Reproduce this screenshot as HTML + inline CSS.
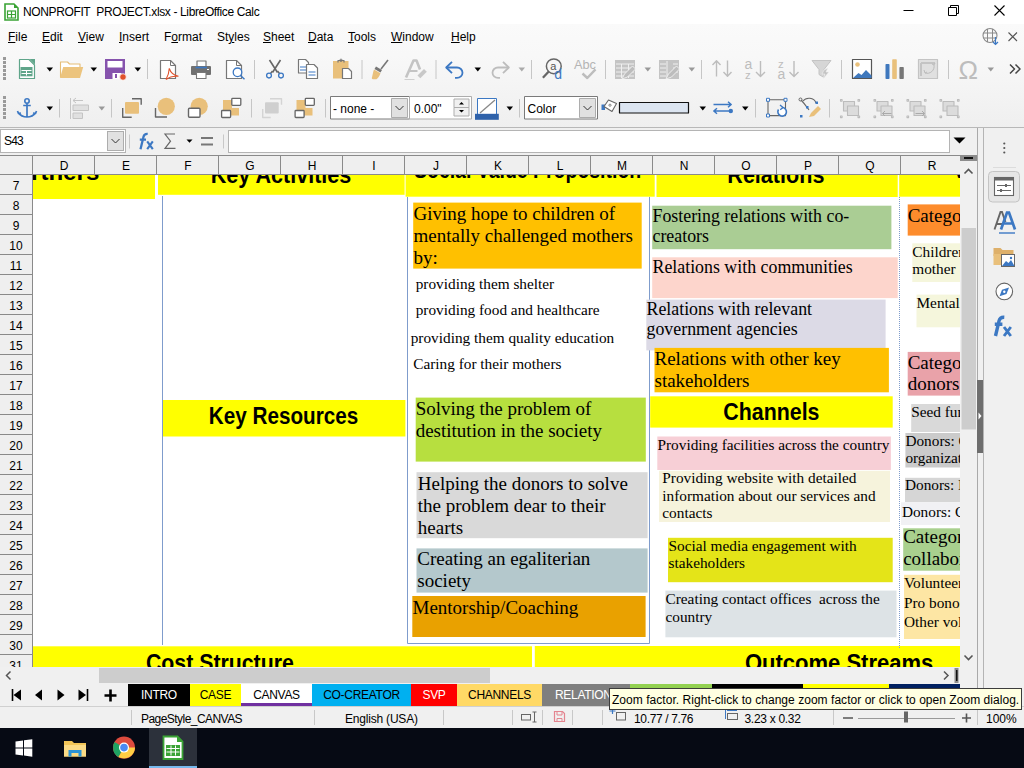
<!DOCTYPE html>
<html><head><meta charset="utf-8">
<style>
*{margin:0;padding:0;box-sizing:border-box}
html,body{width:1024px;height:768px;overflow:hidden;background:#fff;font-family:"Liberation Sans",sans-serif;color:#000}
.a{position:absolute}
#title{left:0;top:0;width:1024px;height:24px;background:#fff}
#menu{left:0;top:24px;width:1024px;height:25px;background:transparent}
#tbars{left:0;top:24px;width:1024px;height:104px;background:linear-gradient(#fafafa 0%,#f8f8f8 30%,#efefef 100%)}
.mi{position:absolute;top:29px;font-size:12px;line-height:16px;color:#000}
.mi u{text-decoration:underline;text-underline-offset:0.5px}
.sep{position:absolute;width:1px;background:#c8c8c8}
.dd{position:absolute;width:0;height:0;border-left:4px solid transparent;border-right:4px solid transparent;border-top:5px solid #000}
.ddg{border-top-color:#999}
#fbar{left:0;top:128px;width:1024px;height:27px;background:#f0f0f0}
#colh{left:0;top:155px;width:960px;height:19px;background:#efefef;border-top:1px solid #999;}
.ch{position:absolute;top:0;height:18px;font-size:12px;line-height:18px;text-align:center;color:#000;border-right:1px solid #999}
.rh{position:absolute;left:0;width:33px;height:20px;font-size:12px;line-height:20px;text-align:center;color:#000;border-bottom:1px solid #999;border-right:1px solid #999;background:#efefef}
#grid{left:33px;top:174px;width:927px;height:493px;background:#fff;overflow:hidden}
.box{position:absolute;font-family:"Liberation Serif",serif;color:#000;white-space:nowrap;overflow:hidden}
.hdr{position:absolute;background:#ffff00;overflow:hidden}
.ht{position:absolute;font-weight:bold;font-size:22.8px;white-space:nowrap;transform-origin:0 0}
.tab{top:684px;height:22px;font-size:12px;line-height:22px;text-align:center;white-space:nowrap;overflow:hidden;color:#000;letter-spacing:-0.3px}
.sb{top:711px;font-size:12px;line-height:16px;white-space:nowrap;color:#000}
</style></head><body>
<!-- title bar -->
<div id="title" class="a">
 <svg class="a" style="left:4px;top:3px" width="15" height="18" viewBox="0 0 15 18"><path d="M1 1h9l4 4v12H1z" fill="#fff" stroke="#3aa335" stroke-width="1.6"/><path d="M10 1v4h4" fill="#3aa335"/><rect x="3.5" y="8" width="8" height="7" fill="none" stroke="#3aa335" stroke-width="1.2"/><path d="M3.5 11.5h8M7.5 8v7" stroke="#3aa335" stroke-width="1.2"/></svg>
 <div class="a" style="left:23px;top:4px;font-size:12px;letter-spacing:-0.37px;line-height:16px">NONPROFIT&nbsp; PROJECT.xlsx - LibreOffice Calc</div>
 <svg class="a" style="left:903px;top:4px" width="12" height="12"><path d="M0.5 6.5h10" stroke="#000" stroke-width="1"/></svg>
 <svg class="a" style="left:948px;top:5px" width="11" height="11"><path d="M0.5 2.5h8v8h-8z M2.5 2.5v-2h8v8h-2" fill="none" stroke="#000" stroke-width="1"/></svg>
 <svg class="a" style="left:994px;top:5px" width="11" height="11"><path d="M0.5 0.5l10 10M10.5 0.5l-10 10" stroke="#000" stroke-width="1.1"/></svg>
</div>
<!-- toolbars bg -->
<div id="tbars" class="a"></div>
<!-- menu -->
<div id="menu" class="a">
 <div class="mi" style="left:8px;top:5px"><u>F</u>ile</div>
 <div class="mi" style="left:42px;top:5px"><u>E</u>dit</div>
 <div class="mi" style="left:78px;top:5px"><u>V</u>iew</div>
 <div class="mi" style="left:119px;top:5px"><u>I</u>nsert</div>
 <div class="mi" style="left:164px;top:5px">F<u>o</u>rmat</div>
 <div class="mi" style="left:217px;top:5px">St<u>y</u>les</div>
 <div class="mi" style="left:263px;top:5px"><u>S</u>heet</div>
 <div class="mi" style="left:308px;top:5px"><u>D</u>ata</div>
 <div class="mi" style="left:348px;top:5px"><u>T</u>ools</div>
 <div class="mi" style="left:391px;top:5px"><u>W</u>indow</div>
 <div class="mi" style="left:451px;top:5px"><u>H</u>elp</div>
 <svg class="a" style="left:982px;top:3px" width="19" height="19" viewBox="0 0 19 19"><circle cx="8" cy="8.5" r="7" fill="none" stroke="#8a8a8a" stroke-width="1.1"/><path d="M1.5 6h13M1.5 11h13M5.5 2v13M10.5 2v13" stroke="#8a8a8a" stroke-width="1"/><path d="M13.5 10v7.5M11 15l2.5 2.5 2.5-2.5" stroke="#3c78c3" stroke-width="1.2" fill="none"/></svg>
 <svg class="a" style="left:1008px;top:8px" width="10" height="10"><path d="M0.5 0.5l8.5 8.5M9 0.5l-8.5 8.5" stroke="#555" stroke-width="1.1"/></svg>
</div>
<!-- toolbars -->

<svg class="a" style="left:0;top:0" width="1024" height="128" viewBox="0 0 1024 128">
<defs>
 <g id="grip"><rect x="0" y="0" width="3" height="3" fill="#9a9a9a"/><rect x="0" y="4" width="3" height="3" fill="#9a9a9a"/><rect x="0" y="8" width="3" height="3" fill="#9a9a9a"/><rect x="0" y="12" width="3" height="3" fill="#9a9a9a"/><rect x="0" y="16" width="3" height="3" fill="#9a9a9a"/><rect x="0" y="20" width="3" height="3" fill="#9a9a9a"/></g>
 <path id="dd" d="M-3 -2h6.5l-3.25 4z"/>
</defs>
<g fill="none" stroke-linejoin="round">
<!-- toolbar 1 -->
<use href="#grip" x="3" y="57"/>
<!-- new -->
<path d="M19.5 59.5h9.5l5.5 5.5v13.5h-15z" fill="#fff" stroke="#5fa58a" stroke-width="1.2"/>
<path d="M29.5 59l5.5 5.5v-5.5z" fill="#5fa58a"/>
<rect x="20.5" y="67" width="12" height="9.3" fill="#5fa58a"/>
<path d="M21.5 70.5h10M21.5 73.5h10M26.5 70v5.5" stroke="#fff" stroke-width="1"/>
<use href="#dd" x="49.5" y="69.5" fill="#000"/>
<!-- open -->
<path d="M60.5 77.5v-15.5h7l2 2h10.5v3.5" fill="#fff" stroke="#e6bd76" stroke-width="1.1"/>
<path d="M60 78l3.2-11h20l-3.2 11z" fill="#ecc47e"/>
<use href="#dd" x="93.5" y="69.5" fill="#000"/>
<!-- save -->
<rect x="105" y="59" width="20" height="20" fill="#8653ad"/>
<rect x="107.5" y="61" width="15" height="6.5" fill="#fff"/>
<rect x="112.5" y="73" width="9" height="6" fill="#fff"/>
<rect x="115" y="74" width="2" height="4" fill="#8653ad"/>
<circle cx="123" cy="77" r="3.3" fill="#e0512b" stroke="#fff" stroke-width="0.8"/>
<use href="#dd" x="137.5" y="69.5" fill="#000"/>
<path d="M147.5 59v20" stroke="#c6c6c6"/>
<!-- pdf -->
<path d="M160.5 60.5h10l5 5v13h-15z" stroke="#777" stroke-width="1.2" fill="#fff"/>
<path d="M170.5 60.5v5h5" stroke="#777" stroke-width="1"/>
<path d="M169.3 68.3c-.2 4.5-1.5 8-3.3 11.3M169.3 68.3c1.2 4.2 4 6.8 9.2 8M166.2 79.5c3.3-2.8 7.5-3.6 12.3-3.2" stroke="#e0512b" stroke-width="1.1"/>
<!-- print -->
<rect x="197" y="61" width="9" height="6" fill="#fff" stroke="#777" stroke-width="1.2"/>
<rect x="191" y="66" width="20" height="9" rx="1" fill="#707070"/>
<path d="M195.5 67.5h11.5" stroke="#3c78c3" stroke-width="1.6"/>
<rect x="196.5" y="72.5" width="9.5" height="6" fill="#fff" stroke="#777" stroke-width="1.1"/>
<rect x="207" y="69" width="2" height="1" fill="#fff"/>
<!-- preview -->
<path d="M226.5 60.5h10l5 5v13h-15z" stroke="#777" stroke-width="1.2" fill="#fff"/>
<path d="M236.5 60.5v5h5" stroke="#777" stroke-width="1"/>
<circle cx="237.5" cy="72.3" r="4.3" stroke="#3c78c3" stroke-width="1.3" fill="#fff"/>
<path d="M240.5 75.5l4 3.8" stroke="#3c78c3" stroke-width="1.5"/>
<path d="M254.5 60v19" stroke="#c6c6c6"/>
<!-- cut -->
<path d="M269.5 60l8 12.5M280.5 60l-8 12.5" stroke="#666" stroke-width="1.6"/>
<path d="M270.5 73.5l2-2.5M279.5 73.5l-2-2.5" stroke="#666" stroke-width="1.4"/>
<circle cx="269" cy="75.6" r="2.4" stroke="#3c78c3" stroke-width="1.3"/>
<circle cx="281" cy="75.6" r="2.4" stroke="#3c78c3" stroke-width="1.3"/>
<!-- copy -->
<path d="M298.5 59.5h7l3 3v10.5h-10z" fill="#fff" stroke="#777" stroke-width="1.2"/>
<path d="M300 67h6M300 70h6" stroke="#3c78c3" stroke-width="1.1"/>
<path d="M306.5 64.5h7.5l3.5 3.5v10.5h-11z" fill="#fff" stroke="#777" stroke-width="1.2"/>
<path d="M308.5 72h7M308.5 75h7" stroke="#3c78c3" stroke-width="1.1"/>
<!-- paste -->
<rect x="333" y="61" width="15.5" height="17.5" fill="#e9c07b"/>
<path d="M338 62.5v-2h6v2" stroke="#777" stroke-width="1.2"/>
<circle cx="341" cy="60.3" r="1.2" stroke="#777" stroke-width="0.9"/>
<path d="M342.5 68.5h6l3 3v7h-9z" fill="#fff" stroke="#777" stroke-width="1.2"/>
<path d="M362 60v19" stroke="#c6c6c6"/>
<!-- brush -->
<path d="M376 66.5l6 3.5-1.5 2.5-6-3.5z" fill="#777"/>
<path d="M381 69l7-9" stroke="#777" stroke-width="1.6"/>
<path d="M374 69.5l6.5 3.8c-1 3-2.5 5-4 6h-3.5c-1 0-1.5-1-1-2 .5-2 1-5 2-7.8z" fill="#e9c07b"/>
<!-- clear -->
<path d="M406 77.5l7.5-17h3l3.5 9" stroke="#c4c4c4" stroke-width="2.6" fill="none"/>
<path d="M409.5 71h8" stroke="#c4c4c4" stroke-width="2"/>
<path d="M417.5 75.5l6.5-6.5 2.8 2.8-6.5 6.5z" fill="#c8c8c8"/>
<path d="M404.5 79.5h10" stroke="#cfcfcf" stroke-width="1"/>
<path d="M436 60v19" stroke="#c6c6c6"/>
<!-- undo -->
<path d="M446.5 67.5h10.5a5.5 5.2 0 0 1 0 10.4h-2" stroke="#3c78c3" stroke-width="1.8"/>
<path d="M452 61.8l-5.8 5.7 5.8 5.7" stroke="#3c78c3" stroke-width="1.8"/>
<use href="#dd" x="477.5" y="69.5" fill="#000"/>
<!-- redo -->
<path d="M508.5 67.5h-10.5a5.5 5.2 0 0 0 0 10.4h2" stroke="#bdbdbd" stroke-width="1.8"/>
<path d="M503 61.8l5.8 5.7-5.8 5.7" stroke="#bdbdbd" stroke-width="1.8"/>
<use href="#dd" x="521.5" y="69.5" fill="#aaa"/>
<path d="M531.5 60v19" stroke="#c6c6c6"/>
<!-- find -->
<circle cx="553.8" cy="66.3" r="7.4" stroke="#666" stroke-width="1.5"/>
<path d="M548.5 71.8l-5.6 6" stroke="#666" stroke-width="2.3"/>
<text x="550.2" y="70.3" font-family="Liberation Sans" font-size="11" fill="#555" stroke="none">a</text>
<text x="554.3" y="79.3" font-family="Liberation Sans" font-size="14" fill="#3c78c3" stroke="none">d</text>
<!-- spelling -->
<text x="574" y="69" font-family="Liberation Sans" font-size="12" fill="#b4b4b4" stroke="none" textLength="22" lengthAdjust="spacingAndGlyphs">Abc</text>
<path d="M582.5 73.5l4.8 4.5 8.2-8.6" stroke="#bdbdbd" stroke-width="2.4"/>
<path d="M605.5 60v19" stroke="#c6c6c6"/>
<!-- row -->
<g fill="#c4c4c4" stroke="none"><rect x="615" y="60" width="20" height="19"/></g>
<path d="M616 64h18M616 68h18M616 72h18M616 76h18M621.5 64v14M628.5 64v14" stroke="#efefef" stroke-width="1"/>
<path d="M622 79l2.5-5 8-8 3 3-8 8z" fill="#bdbdbd" stroke="#f6f6f6" stroke-width="0.8"/>
<use href="#dd" x="647.5" y="69.5" fill="#999"/>
<!-- column -->
<g fill="#c4c4c4" stroke="none"><rect x="659" y="60" width="20" height="19"/></g>
<path d="M660 64h6M660 68h6M660 72h6M660 76h6M667 61v17M673 64h5M673 68h5M673 72h5" stroke="#efefef" stroke-width="1"/>
<path d="M666 79l2.5-5 8-8 3 3-8 8z" fill="#bdbdbd" stroke="#f6f6f6" stroke-width="0.8"/>
<use href="#dd" x="691.5" y="69.5" fill="#999"/>
<path d="M701.5 60v19" stroke="#c6c6c6"/>
<!-- sort -->
<path d="M716.5 76.5v-15.5M712.5 65l4-4.2 4 4.2M727.5 60.5v15.5M723.5 72l4 4.2 4-4.2" stroke="#bdbdbd" stroke-width="1.4"/>
<text x="744.5" y="68.5" font-family="Liberation Sans" font-size="14" fill="#bdbdbd" stroke="none">a</text>
<text x="745" y="78.5" font-family="Liberation Sans" font-size="11.5" fill="#bdbdbd" stroke="none">z</text>
<path d="M760.5 61v15.5M756 72l4.5 4.5 4.5-4.5" stroke="#bdbdbd" stroke-width="1.4"/>
<text x="778" y="68" font-family="Liberation Sans" font-size="11.5" fill="#bdbdbd" stroke="none">z</text>
<text x="777.5" y="79" font-family="Liberation Sans" font-size="14" fill="#bdbdbd" stroke="none">a</text>
<path d="M794 61v15.5M789.5 72l4.5 4.5 4.5-4.5" stroke="#bdbdbd" stroke-width="1.4"/>
<!-- filter -->
<path d="M812 60.5h19l-7 9v8l-5-3v-5z" fill="#d6d6d6" stroke="#c4c4c4" stroke-width="1"/>
<path d="M824 70l4-2-2 4h3l-6 7 2-5h-3z" fill="#c4c4c4" stroke="#f4f4f4" stroke-width="0.6"/>
<path d="M841.5 60v19" stroke="#c6c6c6"/>
<!-- image -->
<rect x="852.5" y="59.5" width="19" height="19" fill="#fff" stroke="#555" stroke-width="1.2"/>
<circle cx="857.5" cy="64.5" r="2.3" fill="#e9c07b"/>
<path d="M853 78l5.5-5 3 2 4.5-5 5.5 5.5v2.5z" fill="#3f78bd"/>
<!-- chart -->
<rect x="885.5" y="64" width="4" height="15" rx="0.8" fill="#3f78bd"/>
<rect x="892.2" y="59.2" width="4.6" height="19.8" rx="0.8" fill="#e9c07b"/>
<rect x="899.4" y="67" width="4.4" height="12" rx="0.8" fill="#777"/>
<!-- pivot -->
<rect x="918.5" y="59.5" width="19" height="19" fill="#e0e0e0" stroke="#c4c4c4" stroke-width="1.2"/>
<path d="M921 63h14M921 63v13" stroke="#c4c4c4" stroke-width="2"/>
<path d="M925 73a7 7 0 0 0 9-8M932 64l2 1 1-2M924 70l1 3 2-1" stroke="#bbb" stroke-width="1"/>
<path d="M948.5 60v19" stroke="#c6c6c6"/>
<!-- omega -->
<text x="958.5" y="78.5" font-family="Liberation Sans" font-size="25" fill="#bdbdbd" stroke="none" textLength="19.5" lengthAdjust="spacingAndGlyphs">Ω</text>
<use href="#dd" x="990.5" y="69.5" fill="#999"/>
<path d="M1010 64.5l4.5 4.5-4.5 4.5M1015.5 64.5l4.5 4.5-4.5 4.5" stroke="#444" stroke-width="1.5"/>

<!-- toolbar 2 -->
<use href="#grip" x="3" y="96"/>
<!-- anchor -->
<circle cx="27" cy="101" r="2.2" stroke="#3c78c3" stroke-width="1.6"/>
<path d="M27 103.3v13.7M23.2 105.5h7.6M18 112.5c3 4 6 4.5 9 4.5s6-.5 9-4.5M17.5 111l1 2.5 2.5-.5M36.5 111l-1 2.5-2.5-.5" stroke="#3c78c3" stroke-width="1.7"/>
<use href="#dd" x="49.5" y="108.5" fill="#000"/>
<path d="M59.5 99v18.5" stroke="#c6c6c6"/>
<!-- align -->
<path d="M70.5 98v21" stroke="#c6c6c6" stroke-width="1"/>
<path d="M73 100.5h10M76 98l-3 2.5 3 2.5" stroke="#c4c4c4" stroke-width="1"/>
<rect x="73" y="105" width="15.5" height="5.5" fill="#e0e0e0" stroke="#c4c4c4" stroke-width="1"/>
<rect x="73" y="113" width="9.5" height="5.5" fill="#e0e0e0" stroke="#c4c4c4" stroke-width="1"/>
<use href="#dd" x="101.5" y="108.5" fill="#999"/>
<path d="M111.5 99v18.5" stroke="#c6c6c6"/>
<!-- bring front -->
<path d="M132 98.8h9.2v6M122.7 108v9.2h9" stroke="#666" stroke-width="1.4"/>
<rect x="125" y="102" width="14" height="11.7" rx="1" fill="#e9c07b"/>
<!-- circle front -->
<path d="M155.5 108v9h11.5" stroke="#666" stroke-width="1.4"/>
<circle cx="166.3" cy="106.3" r="8.6" fill="#e9c07b"/>
<!-- circle back -->
<circle cx="199.2" cy="106.3" r="8.6" fill="#e9c07b"/>
<rect x="188.5" y="108.3" width="11.5" height="9" rx="1" fill="#fff" stroke="#666" stroke-width="1.4"/>
<!-- squares -->
<path d="M223 100h9v8h7v7.5h-9v-5h-7z" fill="#e9c07b"/>
<rect x="231.8" y="98.3" width="9" height="7" rx="0.8" fill="#fff" stroke="#666" stroke-width="1.3"/>
<rect x="221.6" y="110.5" width="9" height="7" rx="0.8" fill="#fff" stroke="#666" stroke-width="1.3"/>
<path d="M251.5 99v18.5" stroke="#c6c6c6"/>
<!-- send back gray -->
<path d="M270 98.8h11.5v6M262.7 109v8.5h8" stroke="#d4d4d4" stroke-width="1.4"/>
<rect x="265" y="102.3" width="13.7" height="11.2" rx="1" fill="#cfcfcf"/>
<!-- squares2 -->
<path d="M296.5 100h9v8h7v7.5h-9v-5h-7z" fill="#e9c07b"/>
<rect x="305.3" y="98.3" width="9" height="7" rx="0.8" fill="#fff" stroke="#666" stroke-width="1.3"/>
<rect x="295.1" y="110.5" width="9" height="7" rx="0.8" fill="#fff" stroke="#666" stroke-width="1.3"/>
<path d="M325.5 99v18.5" stroke="#c6c6c6"/>
<!-- combo none -->
<rect x="330.5" y="96.5" width="79" height="22.5" fill="#fff" stroke="#7a7a7a" stroke-width="1"/>
<rect x="391.5" y="98.5" width="16" height="19" fill="#e1e1e1" stroke="#adadad" stroke-width="1"/>
<path d="M395.5 106l4 4 4-4" stroke="#333" stroke-width="1"/>
<text x="333" y="112.5" font-family="Liberation Sans" font-size="12" fill="#000" stroke="none">- none -</text>
<!-- spin -->
<rect x="409.5" y="96.5" width="62" height="22.5" fill="#fff" stroke="#adadad" stroke-width="1"/>
<text x="414" y="112.5" font-family="Liberation Sans" font-size="12" fill="#000" stroke="none">0.00"</text>
<rect x="454" y="99" width="15" height="8.5" fill="#f0f0f0" stroke="#adadad" stroke-width="1"/>
<rect x="454" y="107.5" width="15" height="8.5" fill="#f0f0f0" stroke="#adadad" stroke-width="1"/>
<path d="M459 104.5h5l-2.5-2.5z M459 110h5l-2.5 2.5z" fill="#000" stroke="none"/>
<!-- line color -->
<rect x="477.5" y="98.5" width="19" height="16" fill="#fff" stroke="#3c78c3" stroke-width="1"/>
<path d="M480 113l15-13" stroke="#888" stroke-width="1.3"/>
<rect x="475" y="113.8" width="23.8" height="6" fill="#2f62aa"/>
<use href="#dd" x="509.5" y="108.5" fill="#000"/>
<path d="M519.5 99v18.5" stroke="#c6c6c6"/>
<!-- color combo -->
<rect x="524.5" y="96.5" width="73" height="22.5" fill="#fff" stroke="#7a7a7a" stroke-width="1"/>
<rect x="579.5" y="98.5" width="16" height="19" fill="#e1e1e1" stroke="#adadad" stroke-width="1"/>
<path d="M583.5 106l4 4 4-4" stroke="#333" stroke-width="1"/>
<text x="527.5" y="112.7" font-family="Liberation Sans" font-size="12" fill="#000" stroke="none">Color</text>
<!-- fill icon -->
<path d="M601.5 104.5h3.5v5.5h-3.5z" fill="#3c78c3"/>
<path d="M604 106.5l4.5-6.5 8 3.5-4.5 8z" fill="#fff" stroke="#666" stroke-width="1.1"/>
<circle cx="610" cy="105.2" r="1.1" stroke="#666" stroke-width="0.8"/>
<rect x="619.5" y="102.5" width="69" height="10.5" fill="#dce5f1" stroke="#111" stroke-width="1.2"/>
<use href="#dd" x="702.5" y="108.5" fill="#000"/>
<!-- arrows -->
<path d="M713.5 104.5h18M728 101.8l3.2 2.7-3.2 2.7M731.5 111h-18M717 108.3l-3.2 2.7 3.2 2.7" stroke="#3c78c3" stroke-width="1.5"/>
<circle cx="730.8" cy="111" r="2.2" fill="#3c78c3"/>
<use href="#dd" x="745" y="108.5" fill="#000"/>
<path d="M755.5 99v18.5" stroke="#c6c6c6"/>
<!-- rotate -->
<rect x="768" y="99.8" width="17.5" height="15.8" stroke="#666" stroke-width="1.1"/>
<rect x="766.5" y="98.3" width="3" height="3" fill="#fff" stroke="#3c78c3" stroke-width="1"/>
<rect x="784" y="98.3" width="3" height="3" fill="#fff" stroke="#3c78c3" stroke-width="1"/>
<rect x="766.5" y="114" width="3" height="3" fill="#fff" stroke="#3c78c3" stroke-width="1"/>
<path d="M778.5 109.5a4.3 4.3 0 1 0 3.8-2" stroke="#3c78c3" stroke-width="1.6" fill="#fff"/>
<path d="M780 105l3 2.5-2.8 2.3" stroke="#3c78c3" stroke-width="1.4"/>
<!-- points -->
<path d="M801 100c3 3 5 6 8 10M803 101c3-4 11-4 13 2" stroke="#666" stroke-width="1.1"/>
<circle cx="800.5" cy="99.5" r="1.5" stroke="#666" stroke-width="1"/>
<rect x="815.5" y="101.5" width="2.5" height="2.5" fill="#3c78c3"/>
<rect x="806" y="106" width="2.5" height="2.5" fill="#3c78c3"/>
<rect x="800" y="115" width="2.5" height="2.5" fill="#3c78c3"/>
<path d="M809 117l2-4 7-7 3 3-7 7z" fill="#e9c07b"/>
<path d="M829.5 99v18.5" stroke="#c6c6c6"/>
<!-- group icons -->
<g stroke="#bcbcbc" stroke-width="1.1">
 <rect x="843.5" y="101.5" width="11" height="9.5" fill="#dcdcdc"/><rect x="847.5" y="106" width="11" height="9.5" fill="#dcdcdc"/>
 <rect x="840.5" y="99.5" width="1.6" height="1.6" fill="#f4f4f4"/>
 <rect x="858.0" y="99.5" width="1.6" height="1.6" fill="#f4f4f4"/>
 <rect x="840.5" y="116.0" width="1.6" height="1.6" fill="#f4f4f4"/>
 <rect x="858.0" y="116.0" width="1.6" height="1.6" fill="#f4f4f4"/>
 <rect x="877.0" y="101.5" width="11" height="9.5" fill="#dcdcdc"/><rect x="881.0" y="106" width="11" height="9.5" fill="#dcdcdc"/>
 <rect x="874.0" y="99.5" width="1.6" height="1.6" fill="#f4f4f4"/>
 <rect x="891.5" y="99.5" width="1.6" height="1.6" fill="#f4f4f4"/>
 <rect x="874.0" y="116.0" width="1.6" height="1.6" fill="#f4f4f4"/>
 <rect x="891.5" y="116.0" width="1.6" height="1.6" fill="#f4f4f4"/>
 <path d="M882.5 113.5h9M885.0 111l-2.5 2.5 2.5 2.5" stroke="#aaa" stroke-width="1" fill="none"/>
 <rect x="910.0" y="101.5" width="11" height="9.5" fill="#dcdcdc"/><rect x="914.0" y="106" width="11" height="9.5" fill="#dcdcdc"/>
 <rect x="907.0" y="99.5" width="1.6" height="1.6" fill="#f4f4f4"/>
 <rect x="924.5" y="99.5" width="1.6" height="1.6" fill="#f4f4f4"/>
 <rect x="907.0" y="116.0" width="1.6" height="1.6" fill="#f4f4f4"/>
 <rect x="924.5" y="116.0" width="1.6" height="1.6" fill="#f4f4f4"/>
 <path d="M915.5 113.5h9M922.0 111l2.5 2.5-2.5 2.5" stroke="#aaa" stroke-width="1" fill="none"/>
 <rect x="943.0" y="101.5" width="11" height="9.5" fill="#dcdcdc"/><rect x="947.0" y="106" width="11" height="9.5" fill="#dcdcdc"/>
 <rect x="940.0" y="99.5" width="1.6" height="1.6" fill="#f4f4f4"/>
 <rect x="957.5" y="99.5" width="1.6" height="1.6" fill="#f4f4f4"/>
 <rect x="940.0" y="116.0" width="1.6" height="1.6" fill="#f4f4f4"/>
 <rect x="957.5" y="116.0" width="1.6" height="1.6" fill="#f4f4f4"/>
</g>
</g>
<path d="M0 127.5h1024" stroke="#b8b8b8" stroke-width="1"/>
</svg>

<!-- formula bar -->
<div id="fbar" class="a"></div>
<div class="a" style="left:0;top:129px;width:126px;height:24px;background:#fff;border:1px solid #b4b4b4"></div>
<div class="a" style="left:4px;top:133px;font-size:12px;line-height:16px;letter-spacing:-0.8px">S43</div>
<div class="a" style="left:107px;top:131px;width:17px;height:20px;background:#e1e1e1;border:1px solid #adadad"></div>
<svg class="a" style="left:0;top:125px" width="1024" height="31" viewBox="0 125 1024 31">
 <path d="M111.5 139l4 4 4-4" stroke="#333" stroke-width="1" fill="none"/>
 <path d="M129.5 134.5v14M223.5 134.5v14" stroke="#c8c8c8" stroke-width="1"/>
 <path d="M140.5 149.2l3-12.5c.6-2.3 1.8-3 4.2-2.8M139.8 139.6h6.2" stroke="#3c78c3" stroke-width="2.3" fill="none"/>
 <path d="M147.2 141.3l5.6 7.9M152.8 141.3l-5.6 7.9" stroke="#3c78c3" stroke-width="2.1" fill="none"/>
 <path d="M175 134h-10l5.5 7.2-5.5 7.2h10.5" stroke="#666" stroke-width="1.2" fill="none"/>
 <path d="M186.5 139.5h6l-3 3.3z" fill="#000"/>
 <path d="M201 138h12M201 144.5h12" stroke="#777" stroke-width="1.8"/>
 <path d="M953.5 137.5h12l-6 6z" fill="#000"/>
</svg>
<div class="a" style="left:228px;top:130px;width:722px;height:23px;background:#fff;border:1px solid #b4b4b4"></div>

<div class="a" style="left:0;top:155px;width:960px;height:20px;background:#efefef;border-top:1px solid #8a8a8a;border-bottom:1px solid #8a8a8a"></div>
<div class="a" style="left:0;top:155px;width:1px;height:512px"></div>
<div class="a" style="left:33px;top:157px;width:62px;height:18px;font-size:12px;line-height:18px;text-align:center">D</div>
<div class="a" style="left:94px;top:156px;width:1px;height:18px;background:#8a8a8a"></div>
<div class="a" style="left:95px;top:157px;width:62px;height:18px;font-size:12px;line-height:18px;text-align:center">E</div>
<div class="a" style="left:156px;top:156px;width:1px;height:18px;background:#8a8a8a"></div>
<div class="a" style="left:157px;top:157px;width:62px;height:18px;font-size:12px;line-height:18px;text-align:center">F</div>
<div class="a" style="left:218px;top:156px;width:1px;height:18px;background:#8a8a8a"></div>
<div class="a" style="left:219px;top:157px;width:62px;height:18px;font-size:12px;line-height:18px;text-align:center">G</div>
<div class="a" style="left:280px;top:156px;width:1px;height:18px;background:#8a8a8a"></div>
<div class="a" style="left:281px;top:157px;width:62px;height:18px;font-size:12px;line-height:18px;text-align:center">H</div>
<div class="a" style="left:342px;top:156px;width:1px;height:18px;background:#8a8a8a"></div>
<div class="a" style="left:343px;top:157px;width:62px;height:18px;font-size:12px;line-height:18px;text-align:center">I</div>
<div class="a" style="left:404px;top:156px;width:1px;height:18px;background:#8a8a8a"></div>
<div class="a" style="left:405px;top:157px;width:62px;height:18px;font-size:12px;line-height:18px;text-align:center">J</div>
<div class="a" style="left:466px;top:156px;width:1px;height:18px;background:#8a8a8a"></div>
<div class="a" style="left:467px;top:157px;width:62px;height:18px;font-size:12px;line-height:18px;text-align:center">K</div>
<div class="a" style="left:528px;top:156px;width:1px;height:18px;background:#8a8a8a"></div>
<div class="a" style="left:529px;top:157px;width:62px;height:18px;font-size:12px;line-height:18px;text-align:center">L</div>
<div class="a" style="left:590px;top:156px;width:1px;height:18px;background:#8a8a8a"></div>
<div class="a" style="left:591px;top:157px;width:62px;height:18px;font-size:12px;line-height:18px;text-align:center">M</div>
<div class="a" style="left:652px;top:156px;width:1px;height:18px;background:#8a8a8a"></div>
<div class="a" style="left:653px;top:157px;width:62px;height:18px;font-size:12px;line-height:18px;text-align:center">N</div>
<div class="a" style="left:714px;top:156px;width:1px;height:18px;background:#8a8a8a"></div>
<div class="a" style="left:715px;top:157px;width:62px;height:18px;font-size:12px;line-height:18px;text-align:center">O</div>
<div class="a" style="left:776px;top:156px;width:1px;height:18px;background:#8a8a8a"></div>
<div class="a" style="left:777px;top:157px;width:62px;height:18px;font-size:12px;line-height:18px;text-align:center">P</div>
<div class="a" style="left:838px;top:156px;width:1px;height:18px;background:#8a8a8a"></div>
<div class="a" style="left:839px;top:157px;width:62px;height:18px;font-size:12px;line-height:18px;text-align:center">Q</div>
<div class="a" style="left:900px;top:156px;width:1px;height:18px;background:#8a8a8a"></div>
<div class="a" style="left:901px;top:157px;width:62px;height:18px;font-size:12px;line-height:18px;text-align:center">R</div>
<div class="a" style="left:962px;top:156px;width:1px;height:18px;background:#8a8a8a"></div>
<div class="a" style="left:0;top:175px;width:32px;height:492px;background:#efefef"></div>
<div class="a" style="left:32px;top:156px;width:1px;height:511px;background:#8a8a8a"></div>
<div class="a" style="left:0;top:177px;width:32px;height:19px;font-size:12px;line-height:19px;text-align:center">7</div>
<div class="a" style="left:0;top:194px;width:32px;height:1px;background:#8a8a8a"></div>
<div class="a" style="left:0;top:197px;width:32px;height:19px;font-size:12px;line-height:19px;text-align:center">8</div>
<div class="a" style="left:0;top:214px;width:32px;height:1px;background:#8a8a8a"></div>
<div class="a" style="left:0;top:217px;width:32px;height:19px;font-size:12px;line-height:19px;text-align:center">9</div>
<div class="a" style="left:0;top:234px;width:32px;height:1px;background:#8a8a8a"></div>
<div class="a" style="left:0;top:237px;width:32px;height:19px;font-size:12px;line-height:19px;text-align:center">10</div>
<div class="a" style="left:0;top:254px;width:32px;height:1px;background:#8a8a8a"></div>
<div class="a" style="left:0;top:257px;width:32px;height:19px;font-size:12px;line-height:19px;text-align:center">11</div>
<div class="a" style="left:0;top:274px;width:32px;height:1px;background:#8a8a8a"></div>
<div class="a" style="left:0;top:277px;width:32px;height:19px;font-size:12px;line-height:19px;text-align:center">12</div>
<div class="a" style="left:0;top:294px;width:32px;height:1px;background:#8a8a8a"></div>
<div class="a" style="left:0;top:297px;width:32px;height:19px;font-size:12px;line-height:19px;text-align:center">13</div>
<div class="a" style="left:0;top:314px;width:32px;height:1px;background:#8a8a8a"></div>
<div class="a" style="left:0;top:317px;width:32px;height:19px;font-size:12px;line-height:19px;text-align:center">14</div>
<div class="a" style="left:0;top:334px;width:32px;height:1px;background:#8a8a8a"></div>
<div class="a" style="left:0;top:337px;width:32px;height:19px;font-size:12px;line-height:19px;text-align:center">15</div>
<div class="a" style="left:0;top:354px;width:32px;height:1px;background:#8a8a8a"></div>
<div class="a" style="left:0;top:357px;width:32px;height:19px;font-size:12px;line-height:19px;text-align:center">16</div>
<div class="a" style="left:0;top:374px;width:32px;height:1px;background:#8a8a8a"></div>
<div class="a" style="left:0;top:377px;width:32px;height:19px;font-size:12px;line-height:19px;text-align:center">17</div>
<div class="a" style="left:0;top:394px;width:32px;height:1px;background:#8a8a8a"></div>
<div class="a" style="left:0;top:397px;width:32px;height:19px;font-size:12px;line-height:19px;text-align:center">18</div>
<div class="a" style="left:0;top:414px;width:32px;height:1px;background:#8a8a8a"></div>
<div class="a" style="left:0;top:417px;width:32px;height:19px;font-size:12px;line-height:19px;text-align:center">19</div>
<div class="a" style="left:0;top:434px;width:32px;height:1px;background:#8a8a8a"></div>
<div class="a" style="left:0;top:437px;width:32px;height:19px;font-size:12px;line-height:19px;text-align:center">20</div>
<div class="a" style="left:0;top:454px;width:32px;height:1px;background:#8a8a8a"></div>
<div class="a" style="left:0;top:457px;width:32px;height:19px;font-size:12px;line-height:19px;text-align:center">21</div>
<div class="a" style="left:0;top:474px;width:32px;height:1px;background:#8a8a8a"></div>
<div class="a" style="left:0;top:477px;width:32px;height:19px;font-size:12px;line-height:19px;text-align:center">22</div>
<div class="a" style="left:0;top:494px;width:32px;height:1px;background:#8a8a8a"></div>
<div class="a" style="left:0;top:497px;width:32px;height:19px;font-size:12px;line-height:19px;text-align:center">23</div>
<div class="a" style="left:0;top:514px;width:32px;height:1px;background:#8a8a8a"></div>
<div class="a" style="left:0;top:517px;width:32px;height:19px;font-size:12px;line-height:19px;text-align:center">24</div>
<div class="a" style="left:0;top:534px;width:32px;height:1px;background:#8a8a8a"></div>
<div class="a" style="left:0;top:537px;width:32px;height:19px;font-size:12px;line-height:19px;text-align:center">25</div>
<div class="a" style="left:0;top:554px;width:32px;height:1px;background:#8a8a8a"></div>
<div class="a" style="left:0;top:557px;width:32px;height:19px;font-size:12px;line-height:19px;text-align:center">26</div>
<div class="a" style="left:0;top:574px;width:32px;height:1px;background:#8a8a8a"></div>
<div class="a" style="left:0;top:577px;width:32px;height:19px;font-size:12px;line-height:19px;text-align:center">27</div>
<div class="a" style="left:0;top:594px;width:32px;height:1px;background:#8a8a8a"></div>
<div class="a" style="left:0;top:597px;width:32px;height:19px;font-size:12px;line-height:19px;text-align:center">28</div>
<div class="a" style="left:0;top:614px;width:32px;height:1px;background:#8a8a8a"></div>
<div class="a" style="left:0;top:617px;width:32px;height:19px;font-size:12px;line-height:19px;text-align:center">29</div>
<div class="a" style="left:0;top:634px;width:32px;height:1px;background:#8a8a8a"></div>
<div class="a" style="left:0;top:637px;width:32px;height:19px;font-size:12px;line-height:19px;text-align:center">30</div>
<div class="a" style="left:0;top:654px;width:32px;height:1px;background:#8a8a8a"></div>
<div class="a" style="left:0;top:657px;width:32px;height:19px;font-size:12px;line-height:19px;text-align:center">31</div>
<!-- SHAPES -->
<svg class="a" style="left:33px;top:175px" width="927" height="492" viewBox="33 175 927 492">
<rect x="33.0" y="175.0" width="122.0" height="24.0" fill="#ffff00"/>
<rect x="158.0" y="175.0" width="246.6" height="19.8" fill="#ffff00"/>
<rect x="405.6" y="175.0" width="249.1" height="21.7" fill="#ffff00"/>
<rect x="656.5" y="175.0" width="241.2" height="22.0" fill="#ffff00"/>
<rect x="899.2" y="175.0" width="60.8" height="21.7" fill="#ffff00"/>
<rect x="162.4" y="400.0" width="243.0" height="36.5" fill="#ffff00"/>
<rect x="650.2" y="396.3" width="242.5" height="31.3" fill="#ffff00"/>
<rect x="33.0" y="646.3" width="499.0" height="20.7" fill="#ffff00"/>
<rect x="534.8" y="646.0" width="425.2" height="21.0" fill="#ffff00"/>
<text x="31.0" y="180.0" font-family="Liberation Sans" font-weight="bold" font-size="24" fill="#000" textLength="68.3" lengthAdjust="spacingAndGlyphs" xml:space="preserve">rtners</text>
<text x="210.7" y="182.9" font-family="Liberation Sans" font-weight="bold" font-size="24" fill="#000" textLength="140.6" lengthAdjust="spacingAndGlyphs" xml:space="preserve">Key Activities</text>
<text x="414.0" y="177.7" font-family="Liberation Sans" font-weight="bold" font-size="24" fill="#000" textLength="227.2" lengthAdjust="spacingAndGlyphs" xml:space="preserve">Social Value Proposition</text>
<text x="727.3" y="182.8" font-family="Liberation Sans" font-weight="bold" font-size="24" fill="#000" textLength="97.1" lengthAdjust="spacingAndGlyphs" xml:space="preserve">Relations</text>
<text x="208.8" y="423.8" font-family="Liberation Sans" font-weight="bold" font-size="24" fill="#000" textLength="149.4" lengthAdjust="spacingAndGlyphs" xml:space="preserve">Key Resources</text>
<text x="723.3" y="419.7" font-family="Liberation Sans" font-weight="bold" font-size="24" fill="#000" textLength="96.2" lengthAdjust="spacingAndGlyphs" xml:space="preserve">Channels</text>
<text x="146.0" y="670.5" font-family="Liberation Sans" font-weight="bold" font-size="24" fill="#000" textLength="147.8" lengthAdjust="spacingAndGlyphs" xml:space="preserve">Cost Structure</text>
<text x="744.9" y="670.5" font-family="Liberation Sans" font-weight="bold" font-size="24" fill="#000" textLength="188.4" lengthAdjust="spacingAndGlyphs" xml:space="preserve">Outcome Streams</text>
<text x="952.0" y="178.0" font-family="Liberation Sans" font-weight="bold" font-size="24" fill="#000" xml:space="preserve">V</text>
<path d="M162.5 196v449" stroke="#7f9ccc" stroke-width="1"/>
<path d="M407.5 197v446.5h242v-446.5" fill="none" stroke="#7f9ccc" stroke-width="1"/>
<path d="M899.5 197v451" stroke="#7f9ccc" stroke-width="1" stroke-dasharray="1 1"/>
<rect x="413.2" y="202.6" width="228.5" height="66.0" fill="#ffc000"/>
<text x="413.5" y="220.4" font-family="Liberation Serif" font-weight="normal" font-size="19" fill="#000" xml:space="preserve">Giving hope to children of</text>
<text x="413.5" y="242.0" font-family="Liberation Serif" font-weight="normal" font-size="19" fill="#000" xml:space="preserve">mentally challenged mothers</text>
<text x="413.5" y="263.6" font-family="Liberation Serif" font-weight="normal" font-size="19" fill="#000" xml:space="preserve">by:</text>
<text x="415.7" y="289.0" font-family="Liberation Serif" font-weight="normal" font-size="15.3" fill="#000" xml:space="preserve">providing them shelter</text>
<text x="415.7" y="315.4" font-family="Liberation Serif" font-weight="normal" font-size="15.3" fill="#000" xml:space="preserve">providing food and healthcare</text>
<text x="410.7" y="343.3" font-family="Liberation Serif" font-weight="normal" font-size="15.3" fill="#000" xml:space="preserve">providing them quality education</text>
<text x="413.2" y="369.2" font-family="Liberation Serif" font-weight="normal" font-size="15.3" fill="#000" xml:space="preserve">Caring for their mothers</text>
<rect x="415.7" y="397.6" width="230.1" height="64.0" fill="#b7df3f"/>
<text x="415.7" y="414.6" font-family="Liberation Serif" font-weight="normal" font-size="19" fill="#000" xml:space="preserve">Solving the problem of</text>
<text x="415.7" y="436.5" font-family="Liberation Serif" font-weight="normal" font-size="19" fill="#000" xml:space="preserve">destitution in the society</text>
<rect x="416.5" y="472.2" width="231.1" height="66.0" fill="#d9d9d9"/>
<text x="417.8" y="489.7" font-family="Liberation Serif" font-weight="normal" font-size="19" fill="#000" xml:space="preserve">Helping the donors to solve</text>
<text x="417.8" y="512.0" font-family="Liberation Serif" font-weight="normal" font-size="19" fill="#000" xml:space="preserve">the problem dear to their</text>
<text x="417.8" y="533.6" font-family="Liberation Serif" font-weight="normal" font-size="19" fill="#000" xml:space="preserve">hearts</text>
<rect x="416.5" y="548.4" width="231.1" height="44.2" fill="#b4c8cc"/>
<text x="417.3" y="565.4" font-family="Liberation Serif" font-weight="normal" font-size="19" fill="#000" xml:space="preserve">Creating an egaliterian</text>
<text x="417.3" y="587.0" font-family="Liberation Serif" font-weight="normal" font-size="19" fill="#000" xml:space="preserve">society</text>
<rect x="412.3" y="596.0" width="233.3" height="41.0" fill="#e9a100"/>
<text x="412.5" y="614.0" font-family="Liberation Serif" font-weight="normal" font-size="19" fill="#000" xml:space="preserve">Mentorship/Coaching</text>
<rect x="652.2" y="205.7" width="239.2" height="43.5" fill="#aacd94"/>
<text x="652.5" y="221.7" font-family="Liberation Serif" font-weight="normal" font-size="17.85" fill="#000" xml:space="preserve">Fostering relations with co-</text>
<text x="652.5" y="241.5" font-family="Liberation Serif" font-weight="normal" font-size="17.85" fill="#000" xml:space="preserve">creators</text>
<rect x="652.2" y="257.3" width="245.5" height="40.8" fill="#fdd5cc"/>
<text x="652.5" y="273.3" font-family="Liberation Serif" font-weight="normal" font-size="17.85" fill="#000" xml:space="preserve">Relations with communities</text>
<rect x="646.3" y="299.6" width="239.3" height="50.8" fill="#dcdae6"/>
<text x="646.5" y="315.4" font-family="Liberation Serif" font-weight="normal" font-size="17.85" fill="#000" xml:space="preserve">Relations with relevant</text>
<text x="646.5" y="335.2" font-family="Liberation Serif" font-weight="normal" font-size="17.85" fill="#000" xml:space="preserve">government agencies</text>
<rect x="654.5" y="347.9" width="234.4" height="44.4" fill="#ffc000"/>
<text x="654.5" y="364.9" font-family="Liberation Serif" font-weight="normal" font-size="19" fill="#000" xml:space="preserve">Relations with other key</text>
<text x="654.5" y="386.5" font-family="Liberation Serif" font-weight="normal" font-size="19" fill="#000" xml:space="preserve">stakeholders</text>
<rect x="657.3" y="436.5" width="233.6" height="33.5" fill="#f7cfd6"/>
<text x="657.5" y="449.7" font-family="Liberation Serif" font-weight="normal" font-size="15.3" fill="#000" xml:space="preserve">Providing facilities across the country</text>
<rect x="659.0" y="470.8" width="231.0" height="51.2" fill="#f6f3dc"/>
<text x="662.3" y="482.7" font-family="Liberation Serif" font-weight="normal" font-size="15.3" fill="#000" xml:space="preserve">Providing website with detailed</text>
<text x="662.3" y="501.0" font-family="Liberation Serif" font-weight="normal" font-size="15.3" fill="#000" xml:space="preserve">information about our services and</text>
<text x="662.3" y="518.2" font-family="Liberation Serif" font-weight="normal" font-size="15.3" fill="#000" xml:space="preserve">contacts</text>
<rect x="668.0" y="537.8" width="224.7" height="44.4" fill="#e4e418"/>
<text x="668.5" y="550.5" font-family="Liberation Serif" font-weight="normal" font-size="15.3" fill="#000" xml:space="preserve">Social media engagement with</text>
<text x="668.5" y="568.2" font-family="Liberation Serif" font-weight="normal" font-size="15.3" fill="#000" xml:space="preserve">stakeholders</text>
<rect x="665.4" y="590.6" width="231.1" height="46.7" fill="#dde3e6"/>
<text x="665.5" y="603.8" font-family="Liberation Serif" font-weight="normal" font-size="15.3" fill="#000" xml:space="preserve">Creating contact offices  across the</text>
<text x="665.5" y="621.6" font-family="Liberation Serif" font-weight="normal" font-size="15.3" fill="#000" xml:space="preserve">country</text>
<rect x="907.7" y="204.4" width="52.3" height="31.2" fill="#fd8c2c"/>
<text x="907.7" y="221.7" font-family="Liberation Serif" font-weight="normal" font-size="19" fill="#000" xml:space="preserve">Category</text>
<rect x="912.3" y="243.3" width="47.7" height="38.7" fill="#f5f6dc"/>
<text x="912.3" y="256.5" font-family="Liberation Serif" font-weight="normal" font-size="15.3" fill="#000" xml:space="preserve">Children of</text>
<text x="912.3" y="274.2" font-family="Liberation Serif" font-weight="normal" font-size="15.3" fill="#000" xml:space="preserve">mother</text>
<rect x="916.5" y="294.6" width="43.5" height="32.7" fill="#f5f6dc"/>
<text x="916.5" y="307.5" font-family="Liberation Serif" font-weight="normal" font-size="15.3" fill="#000" xml:space="preserve">Mentally</text>
<rect x="907.7" y="351.9" width="52.3" height="43.7" fill="#e9a2a9"/>
<text x="907.7" y="368.5" font-family="Liberation Serif" font-weight="normal" font-size="19" fill="#000" xml:space="preserve">Category</text>
<text x="907.7" y="390.4" font-family="Liberation Serif" font-weight="normal" font-size="19" fill="#000" xml:space="preserve">donors</text>
<rect x="911.2" y="404.0" width="48.8" height="28.0" fill="#d9d9d9"/>
<text x="911.2" y="416.5" font-family="Liberation Serif" font-weight="normal" font-size="15.3" fill="#000" xml:space="preserve">Seed funding</text>
<rect x="905.4" y="433.0" width="54.6" height="34.5" fill="#cbcbcb"/>
<text x="905.4" y="445.6" font-family="Liberation Serif" font-weight="normal" font-size="15.3" fill="#000" xml:space="preserve">Donors: Other</text>
<text x="905.4" y="463.0" font-family="Liberation Serif" font-weight="normal" font-size="15.3" fill="#000" xml:space="preserve">organizations</text>
<rect x="905.0" y="477.8" width="55.0" height="24.5" fill="#d6d6d6"/>
<text x="905.0" y="490.0" font-family="Liberation Serif" font-weight="normal" font-size="15.3" fill="#000" xml:space="preserve">Donors: Individual</text>
<rect x="901.0" y="502.3" width="59.0" height="22.7" fill="#f1f1f4"/>
<text x="901.9" y="517.4" font-family="Liberation Serif" font-weight="normal" font-size="15.3" fill="#000" xml:space="preserve">Donors: Government</text>
<rect x="903.2" y="528.3" width="56.8" height="42.4" fill="#a9d08e"/>
<text x="903.2" y="543.3" font-family="Liberation Serif" font-weight="normal" font-size="19" fill="#000" xml:space="preserve">Category</text>
<text x="903.2" y="565.2" font-family="Liberation Serif" font-weight="normal" font-size="19" fill="#000" xml:space="preserve">collaborators</text>
<rect x="904.0" y="574.8" width="56.0" height="64.2" fill="#fde6a4"/>
<text x="904.0" y="588.4" font-family="Liberation Serif" font-weight="normal" font-size="15.3" fill="#000" xml:space="preserve">Volunteers</text>
<text x="904.0" y="607.5" font-family="Liberation Serif" font-weight="normal" font-size="15.3" fill="#000" xml:space="preserve">Pro bono</text>
<text x="904.0" y="626.7" font-family="Liberation Serif" font-weight="normal" font-size="15.3" fill="#000" xml:space="preserve">Other volunteers</text>
</svg>
<!-- /SHAPES -->
<!-- BOTTOM -->
<!-- vertical scrollbar -->
<div class="a" style="left:960px;top:155px;width:18px;height:512px;background:#f0f0f0"></div>
<div class="a" style="left:960px;top:155px;width:17px;height:6px;background:#8c8c8c"></div>
<div class="a" style="left:964px;top:157px;width:9px;height:2px;background:#111"></div>
<svg class="a" style="left:960px;top:160px" width="18" height="507" viewBox="960 160 18 507">
 <path d="M964.5 173.5l4-4 4 4" stroke="#555" stroke-width="1.6" fill="none"/>
 <rect x="961.5" y="228" width="14.5" height="201.5" fill="#cdcdcd"/>
 <path d="M964.5 655.5l4 4 4-4" stroke="#555" stroke-width="1.6" fill="none"/>
</svg>
<div class="a" style="left:977px;top:128px;width:1px;height:579px;background:#a9a9a9"></div>
<div class="a" style="left:978px;top:128px;width:5px;height:579px;background:#f0f0f0"></div>
<div class="a" style="left:977px;top:380px;width:6px;height:73px;background:#6d6d6d"></div>
<svg class="a" style="left:977px;top:410px" width="6" height="12"><path d="M1.5 2.5l3 3.5-3 3.5z" fill="#fff"/></svg>
<div class="a" style="left:983px;top:128px;width:1px;height:579px;background:#b4b4b4"></div>
<!-- sidebar -->
<div class="a" style="left:984px;top:128px;width:40px;height:579px;background:#f0f0f0"></div>
<svg class="a" style="left:984px;top:128px" width="40" height="220" viewBox="984 128 40 220">
 <circle cx="1004.3" cy="143.5" r="1.1" fill="#555"/><circle cx="1004.3" cy="148" r="1.1" fill="#555"/><circle cx="1004.3" cy="152.5" r="1.1" fill="#555"/>
 <path d="M993 167.5h23" stroke="#dcdcdc" stroke-width="1"/>
 <rect x="988.5" y="171.5" width="31" height="30.5" rx="4" fill="#e6e6e6" stroke="#c4c4c4" stroke-width="1"/>
 <rect x="994.5" y="177.5" width="19" height="18" fill="#fff" stroke="#666" stroke-width="1.1"/>
 <rect x="994.5" y="177.5" width="19" height="3" fill="#666"/>
 <path d="M997 185.5h14M997 190.5h14" stroke="#666" stroke-width="1"/>
 <rect x="1005" y="184" width="2" height="3" fill="#666"/><rect x="1000" y="189" width="2" height="3" fill="#666"/>
 <path d="M994.5 229.5l6-17.5h1.5l3.5 10M997 224h5" stroke="#666" stroke-width="1.9" fill="none"/>
 <path d="M1001 229.5l6-17h2l6 17M1003.8 223.5h8.5" stroke="#3c78c3" stroke-width="2.7" fill="none"/>
 <path d="M999 233h16" stroke="#3c78c3" stroke-width="1.4"/>
 <path d="M993.5 248h7l2 2h11v6h-20z" fill="#deb06a"/>
 <path d="M993.5 265v-11h20v11z" fill="#e9c07b"/>
 <rect x="1001.5" y="254.5" width="13" height="12" fill="#fff" stroke="#666" stroke-width="1"/>
 <path d="M1002 266l4-5 2.5 2 2.5-3 3.5 6z" fill="#3c78c3"/>
 <circle cx="1011" cy="258" r="1.2" fill="#3c78c3"/>
 <circle cx="1004.3" cy="291.4" r="8.3" fill="#fff" stroke="#666" stroke-width="1.1"/>
 <path d="M999.5 296.2l2.5-6.5 7-2.3-2.5 6.5z" fill="#3c78c3"/>
 <circle cx="1004.3" cy="291.8" r="1.2" fill="#fff"/>
 <path d="M995.5 336l3.6-15.3c.7-2.8 2.2-3.6 5.2-3.4M994.8 324.3h7.6" stroke="#3c78c3" stroke-width="3.4" fill="none"/>
 <path d="M1004 327l6.8 9M1010.8 327l-6.8 9" stroke="#3c78c3" stroke-width="2.9" fill="none"/>
</svg>
<!-- horizontal scrollbar -->
<div class="a" style="left:0;top:667px;width:960px;height:17px;background:#f0f0f0"></div>
<div class="a" style="left:99px;top:668px;width:391px;height:15px;background:#cdcdcd"></div>
<svg class="a" style="left:0;top:667px" width="978" height="17" viewBox="0 667 978 17">
 <path d="M10.5 671.5l-4 4 4 4" stroke="#555" stroke-width="1.5" fill="none"/>
 <path d="M944 671.5l4 4-4 4" stroke="#555" stroke-width="1.5" fill="none"/>
 <rect x="954.5" y="668" width="4" height="15" fill="#8c8c8c"/>
 <rect x="956" y="670" width="1.5" height="11" fill="#111"/>
</svg>
<!-- tab bar -->
<div class="a" style="left:0;top:684px;width:977px;height:23px;background:#f0f0f0"></div>
<div class="a" style="left:960px;top:667px;width:17px;height:17px;background:#f0f0f0"></div>
<svg class="a" style="left:0;top:684px" width="128" height="22" viewBox="0 684 128 22">
 <path d="M12.5 689v12" stroke="#000" stroke-width="1.6"/><path d="M21 689.5v11l-7.5-5.5z" fill="#000"/>
 <path d="M42 689.5v11l-7 -5.5z" fill="#000"/>
 <path d="M57.5 689.5v11l7-5.5z" fill="#000"/>
 <path d="M78.5 689.5v11l7.5-5.5z" fill="#000"/><path d="M87.5 689v12" stroke="#000" stroke-width="1.6"/>
 <path d="M104.5 695.5h12M110.5 689.5v12" stroke="#000" stroke-width="2.6"/>
</svg>
<div class="a tab" style="left:128px;width:62px;background:#000;color:#fff">INTRO</div>
<div class="a tab" style="left:190px;width:51px;background:#ffff00">CASE</div>
<div class="a tab" style="left:241px;width:71px;background:#fff">CANVAS</div>
<div class="a" style="left:241px;top:703px;width:71px;height:3px;background:#7030a0"></div>
<div class="a tab" style="left:312px;width:99px;background:#00b0f0">CO-CREATOR</div>
<div class="a tab" style="left:411px;width:46px;background:#ff0000;color:#fff">SVP</div>
<div class="a tab" style="left:457px;width:85px;background:#ffd966">CHANNELS</div>
<div class="a tab" style="left:542px;width:88px;background:#7f7f7f;color:#fff;text-align:left;padding-left:13px">RELATIONS</div>
<div class="a tab" style="left:630px;width:82px;background:#92d050"></div>
<div class="a tab" style="left:712px;width:91px;background:#000"></div>
<div class="a tab" style="left:803px;width:86px;background:#ffff00"></div>
<div class="a tab" style="left:889px;width:71px;background:#002060"></div>
<!-- status bar -->
<div class="a" style="left:0;top:706px;width:1024px;height:1px;background:#d0d0d0"></div>
<div class="a" style="left:0;top:707px;width:1024px;height:21px;background:#f0f0f0"></div>
<div class="a sb" style="left:141px;letter-spacing:-0.55px">PageStyle_CANVAS</div>
<div class="a sb" style="left:345px;letter-spacing:-0.2px">English (USA)</div>
<div class="a sb" style="left:634px;letter-spacing:-0.35px">10.77 / 7.76</div>
<div class="a sb" style="left:744.5px;letter-spacing:-0.3px">3.23 x 0.32</div>
<div class="a sb" style="left:986px">100%</div>
<svg class="a" style="left:0;top:707px" width="1024" height="21" viewBox="0 707 1024 21">
 <g stroke="#c8c8c8" stroke-width="1"><path d="M131.5 710v15M314.5 710v15M443.5 710v15M512.5 710v15M542.5 710v15M572.5 710v15M602.5 710v15M833.5 710v15M977.5 710v15"/></g>
 <rect x="521.5" y="714.5" width="9" height="5.5" fill="none" stroke="#666" stroke-width="1"/>
 <path d="M534.5 712v10M532.5 712h4M532.5 722h4" stroke="#666" stroke-width="1"/>
 <path d="M554.5 711.5h8l2 2v8h-10z" fill="none" stroke="#e4848f" stroke-width="1.2"/>
 <path d="M557 712v3h5v-3M557 721.5v-3h5v3" stroke="#e4848f" stroke-width="1" fill="none"/>
 <rect x="616.5" y="712.5" width="9" height="7.5" fill="none" stroke="#666" stroke-width="1"/>
 <path d="M612.5 708v6M609.5 711h6" stroke="#3c78c3" stroke-width="1.2"/>
 <rect x="727.5" y="713.5" width="10" height="6" fill="none" stroke="#666" stroke-width="1"/>
 <path d="M725.5 710v9M727 710.5h10" stroke="#3c78c3" stroke-width="1"/>
 <path d="M843 718h10M962 718h9M966.5 713.5v9" stroke="#555" stroke-width="1.6"/>
 <path d="M858 718.5h97" stroke="#999" stroke-width="1.2"/>
 <rect x="904" y="711.5" width="4" height="11" fill="#666"/>
</svg>
<!-- tooltip -->
<div class="a" style="left:609px;top:688px;width:413px;height:22px;background:#ffffe1;border:1px solid #3c3c3c"></div>
<div class="a" style="left:612px;top:692px;font-size:12px;line-height:16px;white-space:nowrap;letter-spacing:0.04px;color:#000">Zoom factor. Right-click to change zoom factor or click to open Zoom dialog.</div>
<!-- taskbar -->
<div class="a" style="left:0;top:728px;width:1024px;height:40px;background:#060a14"></div>
<div class="a" style="left:149px;top:728px;width:48px;height:40px;background:#2c313b"></div>
<div class="a" style="left:149px;top:765.5px;width:48px;height:2.5px;background:#76b9ed"></div>
<svg class="a" style="left:0;top:728px" width="220" height="40" viewBox="0 728 220 40">
 <path d="M15.5 741.5l7.5-1v7h-7.5zM24 740.3l8.3-1.1v8.3H24zM15.5 748.5h7.5v7l-7.5-1zM24 748.5h8.3v8.2l-8.3-1.1z" fill="#fff"/>
 <path d="M64 741h8l2 2h12v13.5H64z" fill="#f2c557"/>
 <path d="M64 745h22v11.5H64z" fill="#fbdb86"/>
 <path d="M70 756.5v-5h10v5" stroke="#2b93d6" stroke-width="3" fill="none"/>
 <circle cx="124" cy="747.6" r="11" fill="#dd4b3e"/>
 <path d="M124 747.6L114.5 742.1A11 11 0 0 0 118.5 757.1z" fill="#1ea362"/>
 <path d="M124 747.6L118.5 757.1A11 11 0 0 0 135 747.6z" fill="#ffce44"/>
 <path d="M124 747.6L113.5 744A11 11 0 0 0 113.2 744.5z" fill="#1ea362"/>
 <circle cx="124" cy="747.6" r="5" fill="#fff"/>
 <circle cx="124" cy="747.6" r="3.8" fill="#4a8af4"/>
 <path d="M163.5 736.5h14l5 5v17.5h-19z" fill="#fff" stroke="#3aa335" stroke-width="1.8"/>
 <path d="M177 736v6h6z" fill="#3aa335"/>
 <rect x="166" y="745" width="14" height="11" fill="#3aa335"/>
 <path d="M166.5 748.5h13M166.5 752h13M171 745.5v10M175.5 745.5v10" stroke="#fff" stroke-width="1"/>
</svg>

<!-- /BOTTOM -->
</body></html>
